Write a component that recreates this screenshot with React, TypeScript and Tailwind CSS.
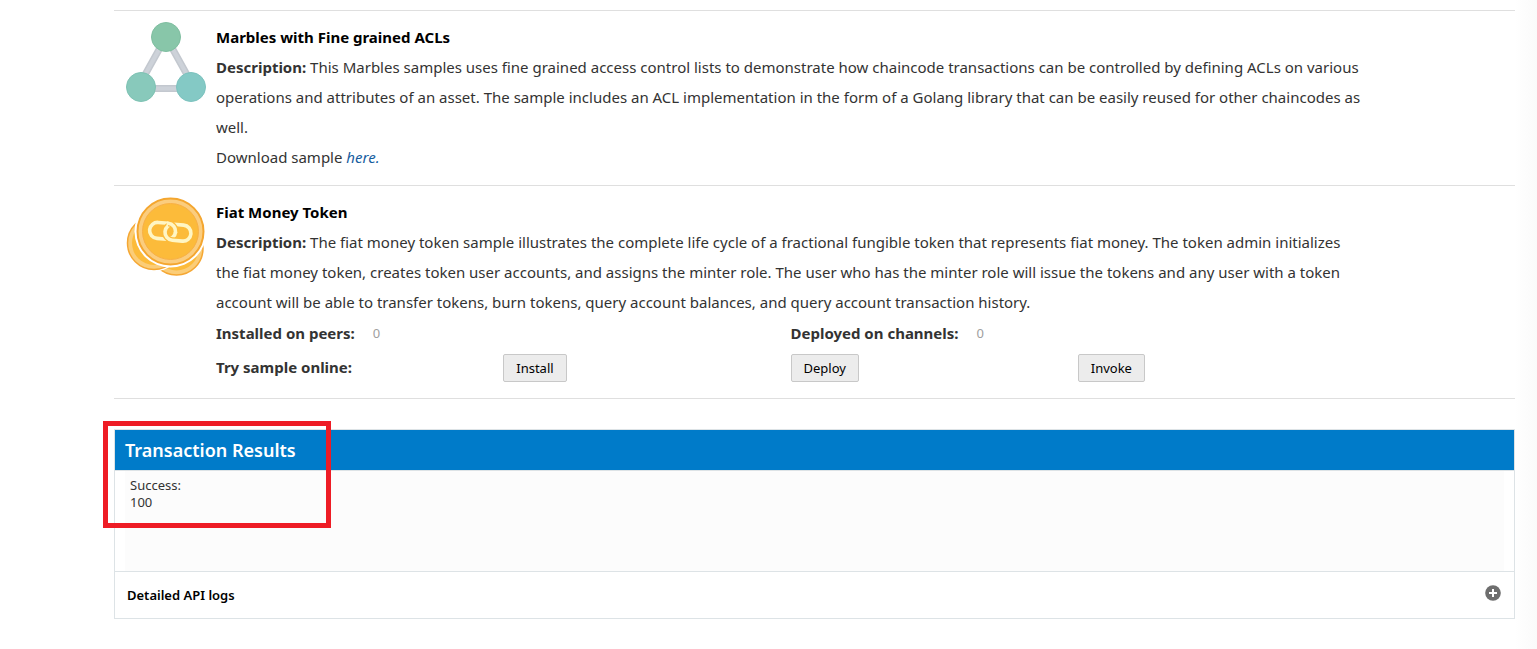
import type { ReactNode } from "react";

function MarblesIcon() {
  return (
    <svg viewBox="0 0 80 80" className="size-20 shrink-0" aria-hidden="true">
      <g stroke="#c3c8cf" strokeWidth="7" fill="none">
        <path d="M40 15 15 60M40 15l25 45M15 66.5h50" />
      </g>
      <g stroke="#cdd2d9" strokeWidth="4" fill="none">
        <path d="M40 15 15 60M40 15l25 45M15 66.5h50" />
      </g>
      <circle cx="40" cy="15" r="14.5" fill="#88c6a9" stroke="#7fbea0" />
      <circle cx="15" cy="65" r="14.5" fill="#88c9bb" stroke="#7ec2b3" />
      <circle cx="65" cy="65" r="14.5" fill="#84c9c5" stroke="#7cc2be" />
    </svg>
  );
}

function CoinsIcon() {
  return (
    <svg viewBox="0 0 80 80" className="size-20 shrink-0" aria-hidden="true">
      <circle cx="50.5" cy="51.5" r="26.500" fill="#fbcd78" stroke="#f5a733" strokeWidth="1.5" />
      <circle cx="50.5" cy="51.5" r="22" fill="#fcbb3a" />
      <circle cx="28" cy="46" r="28.5" fill="#fff" />
      <circle cx="28" cy="46" r="26.5" fill="#fbcd78" stroke="#f5a733" strokeWidth="1.5" />
      <circle cx="28" cy="46" r="22" fill="#fcbb3a" />
      <circle cx="44.5" cy="34.5" r="36" fill="#fff" />
      <circle cx="44.5" cy="34.5" r="33" fill="#fbcd7e" stroke="#f4a62f" strokeWidth="2" />
      <circle cx="44.500" cy="34.5" r="28" fill="#fcbb3a" stroke="#f8b045" strokeWidth="1" />
      <g transform="rotate(5 44 35)" fill="none">
        <rect x="23.500" y="26.500" width="26" height="16" rx="8" stroke="#fff6c4" strokeWidth="3.600" />
        <rect x="39" y="27" width="26" height="16" rx="8" stroke="#fcbb3a" strokeWidth="6" />
        <rect x="39" y="27" width="26" height="16" rx="8" stroke="#fff6c4" strokeWidth="3.600" />
        <path d="M41.500 26.500a8 8 0 0 1 8 8" stroke="#fcbb3a" strokeWidth="6" />
        <path d="M40 26.500h1.500a8 8 0 0 1 8 8v1" stroke="#fff6c4" strokeWidth="3.600" />
      </g>
    </svg>
  );
}

function Sample({ icon, title, children }: { icon: ReactNode; title: string; children: ReactNode }) {
  return (
    <section className="flex gap-[10px] border-t border-[#dfdfdf] pt-[11px] pr-[150px] pl-3">
      {icon}
      <div className="min-w-0 flex-1">
        <h2 className="font-bold text-black">{title}</h2>
        {children}
      </div>
    </section>
  );
}

function SampleButton({ children }: { children: ReactNode }) {
  return (
    <div>
      <button
        type="button"
        className="h-7 rounded-[2px] border border-[#c8c8c8] bg-[#ececec] px-3 text-[13px] leading-5 text-black"
      >
        {children}
      </button>
    </div>
  );
}

export default function App() {
  return (
    <div className="flex min-h-screen bg-white font-['Noto_Sans','Segoe_UI',sans-serif] text-[15px] leading-[30px] text-[#333]">
      <main className="min-w-0 flex-1 pt-[10px] pl-[114px]">
        <Sample icon={<MarblesIcon />} title="Marbles with Fine grained ACLs">
          <p>
            <b>Description:</b> This Marbles samples uses fine grained access control lists to demonstrate how chaincode
            transactions can be controlled by defining ACLs on various operations and attributes of an asset. The sample
            includes an ACL implementation in the form of a Golang library that can be easily reused for other
            chaincodes as well.
          </p>
          <p className="pb-[13px]">
            Download sample{" "}
            <a href="#marbles" className="text-[#145c9e] italic">
              here.
            </a>
          </p>
        </Sample>

        <Sample icon={<CoinsIcon />} title="Fiat Money Token">
          <p>
            <b>Description:</b> The fiat money token sample illustrates the complete life cycle of a fractional fungible
            token that represents fiat money. The token admin initializes the fiat money token, creates token user
            accounts, and assigns the minter role. The user who has the minter role will issue the tokens and any user
            with a token account will be able to transfer tokens, burn tokens, query account balances, and query account
            transaction history.
          </p>
          <div className="grid grid-cols-2 pt-px">
            <div className="flex gap-[18px]">
              <b>Installed on peers:</b>
              <span className="text-[13px] text-[#a0a0a0]">0</span>
            </div>
            <div className="flex gap-[18px]">
              <b>Deployed on channels:</b>
              <span className="text-[13px] text-[#a0a0a0]">0</span>
            </div>
          </div>
          <div className="grid grid-cols-4 items-center pt-1 pb-4">
            <b>Try sample online:</b>
            <SampleButton>Install</SampleButton>
            <SampleButton>Deploy</SampleButton>
            <SampleButton>Invoke</SampleButton>
          </div>
        </Sample>

        <div className="border-t border-[#dfdfdf] pt-[30px]">
          <section className="relative border border-[#dde3e6]">
            <h2 className="bg-[#007bc9] px-[10px] pt-px text-[18px] leading-[39px] font-semibold text-white">
              Transaction Results
            </h2>
            <div className="border-y border-[#dde3e6] px-[10px]">
              <div className="h-[100px] bg-[#fcfcfc] px-[5px] pt-[6px] text-[13px] leading-[17px]">
                <p>Success:</p>
                <p>100</p>
              </div>
            </div>
            <div className="flex h-[46px] items-center justify-between pr-[13px] pl-3">
              <h3 className="text-[13px] leading-5 font-semibold text-black">Detailed API logs</h3>
              <button type="button" aria-label="Expand detailed API logs" className="pb-1">
                <svg viewBox="0 0 16 16" className="size-4" aria-hidden="true">
                  <circle cx="8" cy="8" r="7.8" fill="#6e6e6e" />
                  <path d="M8 4v8M4 8h8" stroke="#fff" strokeWidth="2" />
                </svg>
              </button>
            </div>
            <div className="pointer-events-none absolute -top-[9px] -left-3 h-[107px] w-[228px] border-5 border-[#ee1c25]" />
          </section>
        </div>
      </main>
      <div className="w-[22px] bg-linear-to-r from-white to-[#fafafa]" />
    </div>
  );
}
